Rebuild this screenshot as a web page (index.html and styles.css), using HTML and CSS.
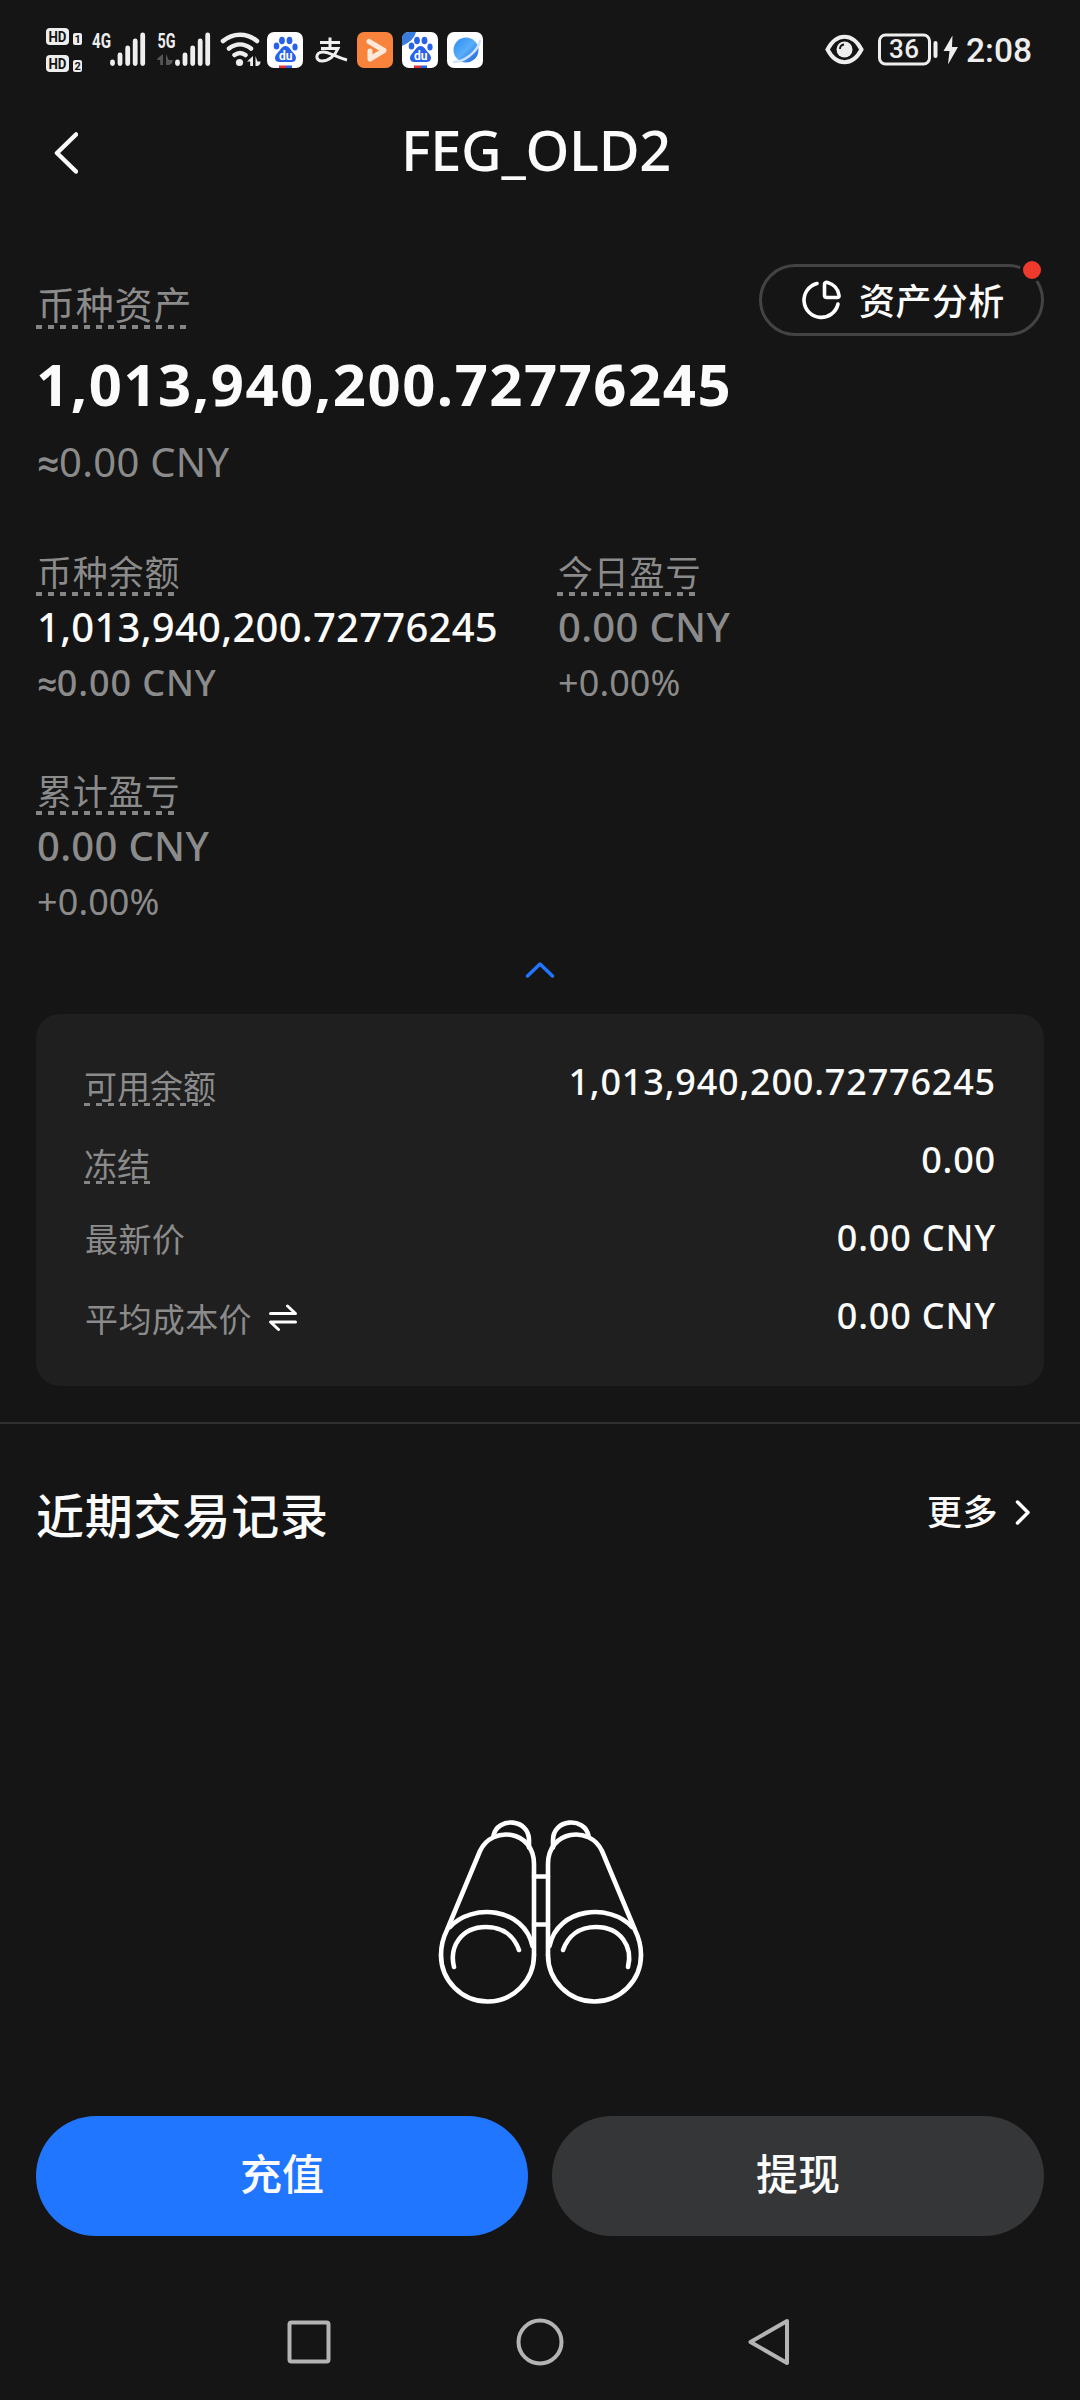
FILE: index.html
```html
<!DOCTYPE html>
<html lang="zh-CN">
<head>
<meta charset="utf-8">
<title>FEG_OLD2</title>
<link rel="stylesheet" href="styles.css">
</head>
<body>
<div class="screen">
  <div class="status-bar">
    <svg class="status-left" width="460" height="60" viewBox="40 20 460 60">
      <g fill="#eee">
        <rect x="46" y="28" width="23" height="17" rx="4"/><rect x="73" y="33" width="9" height="12" rx="2"/>
        <rect x="46" y="55" width="23" height="17" rx="4"/><rect x="73" y="60" width="9" height="12" rx="2"/>
      </g>
      <g class="hd" fill="#151515">
        <text x="48.500" y="41.500" font-size="14" textLength="18" lengthAdjust="spacingAndGlyphs">HD</text>
        <text x="48.500" y="68.500" font-size="14" textLength="18" lengthAdjust="spacingAndGlyphs">HD</text>
        <text x="74.500" y="43" font-size="11">1</text><text x="74.500" y="70" font-size="11">2</text>
      </g>
      <g class="net" fill="#eee">
        <text x="92" y="47.500" font-size="20" textLength="19" lengthAdjust="spacingAndGlyphs">4G</text>
        <text x="157.500" y="47.500" font-size="20" textLength="18" lengthAdjust="spacingAndGlyphs">5G</text>
      </g>
      <g stroke="#eee" stroke-width="4.800" stroke-linecap="round">
        <path d="M112.500 62v1.500M120 55v8.500M127.700 48v15.500M135.200 41v22.500M142.700 35v28.500"/>
        <path d="M177.500 62v1.500M185 55v8.500M192.700 48v15.500M200.200 41v22.500M207.700 35v28.500"/>
      </g>
      <path d="M163 54v11h-2.800v-5H157q0-2 6-6zM166 54v11h2.800q4-1 4-5h-4z" fill="#555"/>
      <g fill="none" stroke="#eee" stroke-width="4.500" stroke-linecap="round">
        <path d="M223 41c10-8.500 24-8.500 34 0M229 48.500c7-5.500 15-5.500 22 0M234.500 55c4-3 7-3 11 0"/>
      </g>
      <circle cx="239.500" cy="62.500" r="3.600" fill="#eee"/>
      <path d="M253 56v10h-2.800v-4.500H247zM255.500 56v10h2q3-1 3-4.500h-3z" fill="#eee"/>

      <rect x="267" y="32" width="36" height="36" rx="7" fill="#fff"/>
      <rect x="402" y="32" width="36" height="36" rx="7" fill="#fff"/>
      <path d="M402 46v-7q0-7 7-7h7q-2 9-14 14z" fill="#3c7cdc"/>
      <g id="paw" fill="#2862e8">
        <ellipse cx="276.500" cy="46" rx="2.800" ry="3.600"/><ellipse cx="282" cy="40.500" rx="2.900" ry="3.800"/>
        <ellipse cx="289.500" cy="40.500" rx="2.900" ry="3.800"/><ellipse cx="295" cy="47" rx="2.600" ry="3.500"/>
        <path d="M285.500 46c4 0 5 4 8 7 4 4 3 9-2 9-3 0-9 0-12 0-5 0-6-5-2-9 3-3 4-7 8-7z"/>
        <text x="279" y="59.500" font-size="12" fill="#fff" class="du">du</text>
        <path d="M279 65.500h7V68h-7z" fill="#e4303c"/><path d="M286 65.500h6V68h-6z"/>
      </g>
      <use href="#paw" x="135"/>
      <path d="M320 42.500h20M330 37.500v11M321 48.500h17c-3 7-9 12.500-16 12.500-7 0-7-9 1-9 7 0 12 5 24 8" fill="none" stroke="#eee" stroke-width="3"/>
      <rect x="357" y="32" width="36" height="36" rx="7" fill="#f8833c"/>
      <path d="M369 41.500l15 9-14 8.500v-8" fill="none" stroke="#ffe9da" stroke-width="5" stroke-linecap="round" stroke-linejoin="round"/>
      <rect x="447" y="32" width="36" height="36" rx="7" fill="#fff"/>
      <circle cx="466" cy="50" r="12.500" fill="url(#globe)"/>
      <path d="M454 62c9 0 23-9 26-21" fill="none" stroke="#cfe2ff" stroke-width="2.500" stroke-linecap="round"/>
      <defs><linearGradient id="globe" x1="0" y1="0" x2="1" y2="1"><stop offset="0" stop-color="#2c8af0"/><stop offset=".5" stop-color="#59aef8"/><stop offset="1" stop-color="#1558d8"/></linearGradient></defs>
    </svg>
    <svg class="status-right" width="220" height="60" viewBox="820 20 220 60">
      <path d="M827.500 49.500c9-17 25-17 34 0-9 17-25 17-34 0z" fill="none" stroke="#eee" stroke-width="4"/>
      <circle cx="844.500" cy="49.500" r="8" fill="#eee"/><path d="M840 49q0-4 4-4.500" fill="none" stroke="#151515" stroke-width="1.800"/>
      <rect x="879.500" y="35" width="50" height="29" rx="6" fill="none" stroke="#eee" stroke-width="3"/>
      <path d="M935.500 43v13" stroke="#eee" stroke-width="4" stroke-linecap="round"/>
      <path d="M952.500 35.500L943.500 51h6l-1.500 13.500L958 47h-6z" fill="#eee"/>
      <g class="clock" fill="#eee">
        <text x="889" y="58" font-size="26" textLength="30">36</text>
        <text x="966" y="62" font-size="34" textLength="66" lengthAdjust="spacingAndGlyphs">2:08</text>
      </g>
    </svg>
  </div>

  <header class="header">
    <svg class="back" width="30" height="48" viewBox="48 128 30 48"><path d="M76 134.500L57 153l19 18.500" fill="none" stroke="#fbfbfb" stroke-width="4.500" stroke-linecap="round" stroke-linejoin="round"/></svg>
    <h1 class="title">FEG_OLD2</h1>
  </header>

  <section class="asset">
    <div class="asset-main">
      <span class="label label-lg dashed">币种资产</span>
      <div class="total">1,013,940,200.72776245</div>
      <div class="approx"><span class="sign">≈</span>0.00 CNY</div>
    </div>
    <button class="analysis">
      <svg width="42" height="42" viewBox="800 279 42 42" fill="none" stroke="#fff" stroke-width="3.600" stroke-linecap="round" stroke-linejoin="round"><path d="M817 283.500a17.200 17.200 0 1 0 21 20.500"/><path d="M824.500 284.500v10.500q0 2.500 2.500 2.500h10q2.500 0 2-2.500c-1-6-5.500-11-11.500-12.500q-3-.500-3 2z"/></svg>
      <span>资产分析</span>
      <i class="dot"></i>
    </button>
  </section>

  <section class="stats">
    <div class="stat"><span class="label dashed">币种余额</span><div class="value white">1,013,940,200.72776245</div><div class="sub medium"><span class="sign">≈</span>0.00 CNY</div></div>
    <div class="stat"><span class="label dashed">今日盈亏</span><div class="value cny">0.00 CNY</div><div class="sub">+0.00%</div></div>
    <div class="stat"><span class="label dashed">累计盈亏</span><div class="value cny">0.00 CNY</div><div class="sub">+0.00%</div></div>
  </section>

  <svg class="collapse" width="34" height="22" viewBox="523 959 34 22"><path d="M527.500 976l12.500-12 12.500 12" fill="none" stroke="#2176ff" stroke-width="3.500" stroke-linecap="round" stroke-linejoin="round"/></svg>

  <section class="card">
    <div class="row"><span class="key low"><span class="under">可用余额</span></span><span class="amount">1,013,940,200.72776245</span></div>
    <div class="row"><span class="key low"><span class="under">冻结</span></span><span class="amount">0.00</span></div>
    <div class="row"><span class="key loose mid">最新价</span><span class="amount">0.00 CNY</span></div>
    <div class="row"><span class="key loose low">平均成本价
      <svg width="30" height="28" viewBox="268 1305 30 28" fill="none" stroke="#fff" stroke-width="3" stroke-linecap="round" stroke-linejoin="round"><path d="M270.500 1314.500h25l-8-7.500M295.500 1323h-25l8 7.500"/></svg></span><span class="amount">0.00 CNY</span></div>
  </section>

  <section class="records">
    <h2>近期交易记录</h2>
    <a class="more">更多<svg width="18" height="28" viewBox="1014 1499 18 28"><path d="M1017.500 1503l10.500 10.500-10.500 10.500" fill="none" stroke="#fff" stroke-width="3.500" stroke-linecap="round" stroke-linejoin="round"/></svg></a>
  </section>

  <div class="empty">
    <svg width="210" height="190" viewBox="15 16 210 190" fill="none" stroke="#fff" stroke-width="4.600" stroke-linecap="round" stroke-linejoin="round">
      <g id="tube">
        <path d="M114 155V64C114 30 72 25 60 51L27 130C22 140 21 146 21 155"/>
        <path d="M21 155a46.500 46.500 0 0 0 93 0M30 127C52 103 104 107 112.500 146"/>
        <path d="M34 167c-5-20 7-40 32-40 17 0 28 9 33 23"/>
        <path d="M73.500 35.500c4-19 36-17 35.500 5v7"/>
      </g>
      <use href="#tube" transform="matrix(-1 0 0 1 242 0)"/>
      <path d="M114 76.500h14M114 124.500h14"/>
    </svg>
  </div>

  <div class="actions">
    <button class="btn primary">充值</button>
    <button class="btn">提现</button>
  </div>

  <nav class="nav">
    <svg width="50" height="50" viewBox="0 0 50 50"><rect x="5.500" y="5.500" width="39" height="39" rx="2"/></svg>
    <svg width="50" height="50" viewBox="0 0 50 50"><circle cx="25" cy="25" r="21.500"/></svg>
    <svg width="50" height="50" viewBox="0 0 50 50"><path d="M41 4L4.500 25 41 46z"/></svg>
  </nav>
</div>
</body>
</html>
```
FILE: styles.css
```css
* { box-sizing: border-box; margin: 0; padding: 0; }
body { background: #151515; color: #fbfbfb; font-family: "Noto Sans", "Noto Sans CJK SC", sans-serif; }
button { border: 0; color: inherit; }
svg { display: block; flex: none; }
.screen { width: 1080px; height: 2400px; display: flex; flex-direction: column; overflow: hidden; }

.status-bar { height: 96px; padding: 20px 40px 0; display: flex; justify-content: space-between; flex: none; }
.hd, .du { font-family: Roboto, sans-serif; font-weight: 700; }
.net { font-family: Roboto, sans-serif; font-weight: 700; }
.clock { font-family: Roboto, sans-serif; font-weight: 500; }

.header { height: 105px; flex: none; display: grid; grid-template-columns: 30px 1fr 30px; align-items: center; padding: 0 56px 0 48px; }
.back { margin-top: 7px; }
.title { font-size: 56px; font-weight: 500; line-height: 76px; letter-spacing: -.3px; text-align: center; white-space: nowrap; }

.asset { display: flex; justify-content: space-between; align-items: flex-start; margin-top: 63px; padding: 0 36px; height: 283px; flex: none; }
.asset-main { padding-top: 13px; }
.label { display: block; width: max-content; height: 49px; padding-left: 1px; font: 400 35px/48px "Noto Sans CJK SC", sans-serif; letter-spacing: .8px; color: #8b8b8b; }
.label-lg { height: 52px; font-size: 38px; line-height: 52px; letter-spacing: .8px; }
.dashed { background: repeating-linear-gradient(90deg, #858585 0 6px, transparent 6px 12px) 0 100% / 100% 4px no-repeat; }
.total { margin-top: 19px; font-size: 58px; font-weight: 700; line-height: 71px; letter-spacing: 1.5px; }
.approx { margin-top: 18px; padding-left: 1px; font-size: 40px; line-height: 50px; letter-spacing: .3px; color: #8b8b8b; }
.sign { display: inline-block; width: .55em; font-family: Roboto, sans-serif; font-weight: 500; line-height: 1; }

.analysis { position: relative; width: 285px; height: 72px; border: 3px solid #434343; border-radius: 36px; background: none; display: flex; align-items: center; padding-left: 38px; gap: 17px; font: 500 36px/50px "Noto Sans CJK SC", sans-serif; letter-spacing: .4px; white-space: nowrap; }
.analysis span { padding-bottom: 3px; }
.dot { position: absolute; right: -3px; top: -9px; width: 24px; height: 24px; border: 3px solid #151515; border-radius: 50%; background: #ee3a2c; }

.stats { display: grid; grid-template-columns: 521px 1fr; row-gap: 62px; padding: 0 36px; flex: none; }
.value { margin-top: 7px; padding-left: 1px; font-size: 40px; font-weight: 500; line-height: 48px; letter-spacing: .25px; color: #8b8b8b; }
.white { color: #fbfbfb; }
.cny { letter-spacing: .3px; }
.sub { margin-top: 10px; padding-left: 1px; font-size: 36px; line-height: 44px; margin-bottom: -1px; letter-spacing: .1px; color: #8b8b8b; }
.medium { font-weight: 500; letter-spacing: .9px; }

.collapse { margin: 36px auto 0; }

.card { margin: 33px 36px 0; height: 372px; padding: 28px 48px 32px; border-radius: 24px; background: #1f1f1f; flex: none; }
.row { height: 78px; display: flex; justify-content: space-between; align-items: center; }
.key { display: flex; align-items: center; gap: 16px; font: 400 33px/44px "Noto Sans CJK SC", sans-serif; color: #8b8b8b; }
.low { padding-top: 6px; }
.mid { padding-top: 2px; }
.loose { letter-spacing: .4px; padding-left: 1px; }
.under { height: 43px; background: repeating-linear-gradient(90deg, #858585 0 6px, transparent 6px 12px) 0 100% / 100% 3px no-repeat; }
.amount { font-size: 36px; font-weight: 500; letter-spacing: .8px; }

.records { margin-top: 36px; border-top: 2px solid #303030; padding: 54px 48px 0 36px; display: flex; justify-content: space-between; height: 394px; flex: none; }
.records h2 { font: 500 48px/70px "Noto Sans CJK SC", sans-serif; letter-spacing: .8px; }
.more { display: flex; align-items: center; gap: 16px; height: 64px; font: 500 35px/64px "Noto Sans CJK SC", sans-serif; letter-spacing: .5px; }
.more svg { margin-top: 4px; }

.empty { display: flex; justify-content: center; height: 300px; flex: none; }
.actions { display: grid; grid-template-columns: 1fr 1fr; gap: 24px; padding: 0 36px; flex: none; }
.btn { height: 120px; border-radius: 60px; padding-bottom: 8px; background: #353638; font: 500 42px/60px "Noto Sans CJK SC", sans-serif; }
.primary { background: #2176ff; }
.nav { margin-top: 81px; padding-left: 284px; display: flex; gap: 181px; fill: none; stroke: #b4b4b4; stroke-width: 4; stroke-linejoin: round; }
```
